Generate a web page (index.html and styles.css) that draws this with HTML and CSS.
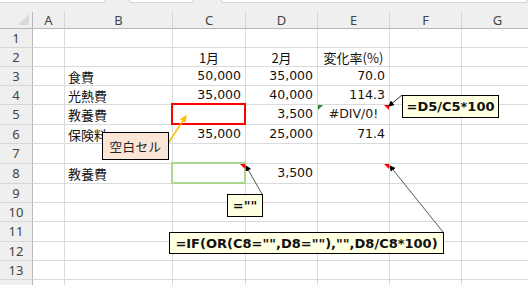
FILE: index.html
```html
<!DOCTYPE html>
<html lang="ja">
<head>
<meta charset="utf-8">
<link rel="stylesheet" href="styles.css">
</head>
<body>
<div class="page">
  <div class="topband">
    <div class="tb tb1"></div><div class="tb tb2"></div><div class="tb tb3"></div>
  </div>
  <div class="sheet">
    <!-- header -->
    <div class="c corner"><span class="tri-corner"></span></div>
    <div class="c ch">A</div><div class="c ch">B</div><div class="c ch">C</div><div class="c ch">D</div><div class="c ch">E</div><div class="c ch">F</div><div class="c ch">G</div>
    <!-- 1 -->
    <div class="c rh">1</div><div class="c"></div><div class="c"></div><div class="c"></div><div class="c"></div><div class="c"></div><div class="c"></div><div class="c"></div>
    <!-- 2 -->
    <div class="c rh">2</div><div class="c"></div><div class="c"></div><div class="c ctr jp">1月</div><div class="c ctr jp">2月</div><div class="c ctr jp">変化率(%)</div><div class="c"></div><div class="c"></div>
    <!-- 3 -->
    <div class="c rh">3</div><div class="c"></div><div class="c jp">食費</div><div class="c num">50,000</div><div class="c num">35,000</div><div class="c num">70.0</div><div class="c"></div><div class="c"></div>
    <!-- 4 -->
    <div class="c rh">4</div><div class="c"></div><div class="c jp">光熱費</div><div class="c num">35,000</div><div class="c num">40,000</div><div class="c num">114.3</div><div class="c"></div><div class="c"></div>
    <!-- 5 -->
    <div class="c rh">5</div><div class="c"></div><div class="c jp">教養費</div><div class="c"><span class="sel sel-red"></span></div><div class="c num">3,500</div><div class="c ctr err">#DIV/0!<span class="tri-green"></span><span class="tri-red"></span></div><div class="c"></div><div class="c"></div>
    <!-- 6 -->
    <div class="c rh">6</div><div class="c"></div><div class="c jp">保険料</div><div class="c num">35,000</div><div class="c num">25,000</div><div class="c num">71.4</div><div class="c"></div><div class="c"></div>
    <!-- 7 -->
    <div class="c rh">7</div><div class="c"></div><div class="c"></div><div class="c"></div><div class="c"></div><div class="c"></div><div class="c"></div><div class="c"></div>
    <!-- 8 -->
    <div class="c rh">8</div><div class="c"></div><div class="c jp">教養費</div><div class="c"><span class="sel sel-green"></span><span class="tri-red"></span></div><div class="c num">3,500</div><div class="c"><span class="tri-red"></span></div><div class="c"></div><div class="c"></div>
    <!-- 9 -->
    <div class="c rh">9</div><div class="c"></div><div class="c"></div><div class="c"></div><div class="c"></div><div class="c"></div><div class="c"></div><div class="c"></div>
    <!-- 10 -->
    <div class="c rh">10</div><div class="c"></div><div class="c"></div><div class="c"></div><div class="c"></div><div class="c"></div><div class="c"></div><div class="c"></div>
    <!-- 11 -->
    <div class="c rh">11</div><div class="c"></div><div class="c"></div><div class="c"></div><div class="c"></div><div class="c"></div><div class="c"></div><div class="c"></div>
    <!-- 12 -->
    <div class="c rh">12</div><div class="c"></div><div class="c"></div><div class="c"></div><div class="c"></div><div class="c"></div><div class="c"></div><div class="c"></div>
    <!-- 13 -->
    <div class="c rh">13</div><div class="c"></div><div class="c"></div><div class="c"></div><div class="c"></div><div class="c"></div><div class="c"></div><div class="c"></div>
    <!-- 14 -->
    <div class="c rh">14</div><div class="c"></div><div class="c"></div><div class="c"></div><div class="c"></div><div class="c"></div><div class="c"></div><div class="c"></div>
  </div>

  <svg class="lines" width="528" height="285" viewBox="0 0 528 285">
    <defs>
      <marker id="ah" markerWidth="6" markerHeight="6" refX="5" refY="3" orient="auto" markerUnits="userSpaceOnUse">
        <path d="M0,0 L6,3 L0,6 Z" fill="#000"/>
      </marker>
      <marker id="ao" markerWidth="7" markerHeight="7" refX="6" refY="3.5" orient="auto" markerUnits="userSpaceOnUse">
        <path d="M0,0 L7,3.5 L0,7 Z" fill="#ffc000"/>
      </marker>
    </defs>
    <line x1="402" y1="95" x2="389" y2="106" stroke="#333" stroke-width="1" marker-end="url(#ah)"/>
    <line x1="262" y1="194" x2="246" y2="166" stroke="#555" stroke-width="1" marker-end="url(#ah)"/>
    <line x1="443" y1="232" x2="390" y2="166" stroke="#555" stroke-width="1" marker-end="url(#ah)"/>
    <line x1="167" y1="145" x2="186" y2="116" stroke="#ffc000" stroke-width="1.5" marker-end="url(#ao)"/>
  </svg>

  <div class="callout note-blank">空白セル</div>
  <div class="callout tip tip-div">=D5/C5*100</div>
  <div class="callout tip tip-empty">=""</div>
  <div class="callout tip tip-if">=IF(OR(C8="",D8=""),"",D8/C8*100)</div>
</div>
</body>
</html>
```

FILE: styles.css
```css
html, body {
  margin: 0;
  padding: 0;
  background: #ffffff;
  overflow: hidden;
}
.page {
  position: relative;
  width: 528px;
  height: 285px;
  overflow: hidden;
  font-family: "DejaVu Sans", "Noto Sans CJK JP", sans-serif;
}
.topband {
  height: 12px;
  background: #efefef;
  display: flex;
  gap: 0;
}
.tb {
  height: 2px;
  background: #fff;
  border: 1px solid #d4d4d4;
  border-top: none;
  border-radius: 0 0 3px 3px;
}
.tb1 { width: 107px; margin-left: -2px; }
.tb2 { width: 63px; margin-left: 23px; }
.tb3 { width: 308px; margin-left: 27px; }

.sheet {
  display: grid;
  grid-template-columns: 33px 32px 108px 73px 72px 72px 72px 72px;
  grid-template-rows: 17px 19px 19px 19px 19px 20px 19px 20px 20px 19px 19px 20px 19px 19px 19px;
}
.c {
  position: relative;
  box-sizing: border-box;
  border-right: 1px solid #dadada;
  border-bottom: 1px solid #dadada;
  font-size: 12.5px;
  color: #111;
  line-height: 18px;
  padding: 0 3px;
  white-space: nowrap;
}
.ch {
  background: #efefef;
  border-right: 1px solid #d6d6d6;
  border-bottom: 1px solid #b8b8b8;
  text-align: center;
  color: #444;
  font-family: "Noto Sans", sans-serif;
  font-size: 13px;
  line-height: 16px;
}
.corner {
  background: #efefef;
  border-right: 1px solid #b8b8b8;
  border-bottom: 1px solid #b8b8b8;
}
.tri-corner {
  position: absolute;
  right: 3px;
  bottom: 3px;
  width: 0;
  height: 0;
  border-left: 11px solid transparent;
  border-bottom: 11px solid #d9d9d9;
}
.rh {
  background: #efefef;
  border-right: 1px solid #b8b8b8;
  border-bottom: 1px solid #d6d6d6;
  text-align: center;
  color: #444;
  font-family: "Noto Sans", sans-serif;
  font-size: 13px;
  line-height: 19px;
}
.jp {
  font-family: "Noto Sans CJK JP", sans-serif;
  font-size: 13px;
  line-height: 19px;
}
.ctr { text-align: center; }
.num { text-align: right; padding-right: 4px; }
.err { color: #222; }

.sel {
  position: absolute;
  left: -2px;
  top: -2px;
  right: -1px;
  bottom: -1px;
  box-sizing: border-box;
  border: 2px solid;
}
.sel-red { border-color: #ff0000; }
.sel-green { border-color: #a9d98b; }

.tri-red {
  position: absolute;
  right: 0;
  top: 0;
  width: 0;
  height: 0;
  border-left: 5px solid transparent;
  border-top: 5px solid #ff0000;
}
.tri-green {
  position: absolute;
  left: 0;
  top: 0;
  width: 0;
  height: 0;
  border-right: 5px solid transparent;
  border-top: 5px solid #1e8c30;
}

.lines {
  position: absolute;
  left: 0;
  top: 0;
  pointer-events: none;
}
.callout {
  position: absolute;
  box-sizing: border-box;
  border: 1px solid #000;
  white-space: nowrap;
  display: flex;
  align-items: center;
  justify-content: center;
}
.note-blank {
  left: 102px;
  top: 132px;
  width: 67px;
  height: 28px;
  background: #fbe5d6;
  font-family: "Noto Sans CJK JP", sans-serif;
  font-size: 12.5px;
  letter-spacing: 0.5px;
  color: #222;
}
.tip {
  background: #ffffe1;
  font-family: "DejaVu Sans", sans-serif;
  font-weight: bold;
  font-size: 13px;
  color: #111;
}
.tip-div {
  left: 402px;
  top: 95px;
  width: 97px;
  height: 23px;
}
.tip-empty {
  left: 227px;
  top: 194px;
  width: 36px;
  height: 23px;
}
.tip-if {
  left: 169px;
  top: 232px;
  width: 275px;
  height: 22px;
}
```
